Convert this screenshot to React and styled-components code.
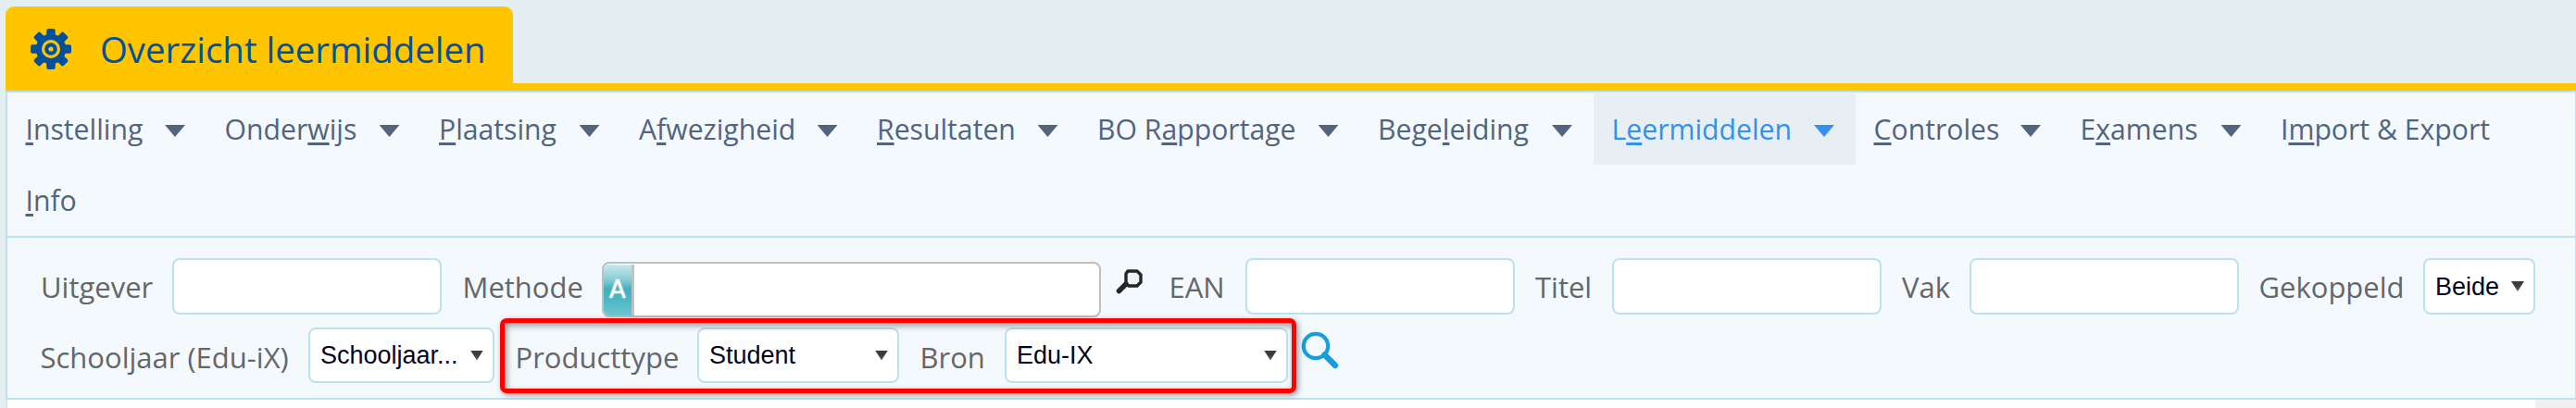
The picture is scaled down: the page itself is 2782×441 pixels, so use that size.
import React from 'react';
import styled, { createGlobalStyle } from 'styled-components';

const Global = createGlobalStyle`
  *, *::before, *::after { box-sizing: border-box; }
  body { margin: 0; background: #e5eef0; font-family: "Open Sans", "Noto Sans", sans-serif; }
`;

const Page = styled.div`
  height: 441px;
  padding: 7px 0 0 6px;
  overflow: hidden;
  display: flex;
  flex-direction: column;
`;

const TabBar = styled.header`
  height: 91px;
  flex: none;
  display: flex;
  align-items: stretch;
  border-bottom: 8px solid #ffc600;
`;

const Tab = styled.div`
  width: 548px;
  margin-bottom: -8px;
  padding-left: 27px;
  display: flex;
  align-items: center;
  gap: 31px;
  background: #ffc600;
  border-radius: 9px 9px 0 0;
  color: #00509e;
`;

const Title = styled.h1`
  margin: 0;
  font-size: 38.4px;
  font-weight: 400;
  line-height: 52px;
  white-space: nowrap;
`;

const Panel = styled.main`
  height: 334px;
  flex: none;
  background: #f3f9fd;
  border: 2px solid #bce1ef;
  border-right-width: 1px;
`;

const Menu = styled.nav`
  height: 157px;
  padding-top: 1px;
  display: flex;
  flex-wrap: wrap;
  align-content: flex-start;
  border-bottom: 2px solid #bce1ef;
`;

const MenuItem = styled.a`
  width: ${(p) => p.$width}px;
  height: 77px;
  padding: 0 23px 0 19.5px;
  display: flex;
  align-items: center;
  justify-content: space-between;
  font-size: 30.2px;
  white-space: nowrap;
  color: ${(p) => (p.$active ? '#348fee' : '#53647f')};
  background: ${(p) => (p.$active ? '#e7eff5' : 'transparent')};
`;

const AccessKey = styled.span`
  text-decoration: underline;
  text-decoration-thickness: 3px;
  text-underline-offset: 3px;
  text-decoration-skip-ink: none;
`;

const MenuArrow = styled.span`
  width: 22px;
  height: 13px;
  margin-top: 4px;
  background: currentColor;
  clip-path: polygon(0 0, 100% 0, 50% 100%);
`;

const Filters = styled.form`
  padding: 22px 0 0 34px;
  display: flex;
  flex-direction: column;
  gap: 14px;
`;

const FilterRow = styled.div`
  height: ${(p) => p.$height}px;
  display: flex;
  align-items: center;
`;

const Label = styled.label`
  width: ${(p) => p.$width}px;
  flex: none;
  padding: ${(p) => p.$drop || 0}px 0 0 ${(p) => p.$indent ?? 1.5}px;
  font-size: 31px;
  line-height: 42px;
  white-space: nowrap;
  color: #666;
`;

const TextInput = styled.input`
  width: 291px;
  height: 61px;
  flex: none;
  margin: 0 ${(p) => p.$after || 0}px 0 0;
  border: 2px solid #bce1ef;
  border-radius: 8px;
  background: #fff;
`;

const SelectBox = styled.div`
  width: ${(p) => p.$width}px;
  height: ${(p) => p.$height || 60}px;
  flex: none;
  margin-right: ${(p) => p.$after || 0}px;
  padding: 0 10px 0 11px;
  display: flex;
  align-items: center;
  justify-content: space-between;
  border: 2px solid #bce1ef;
  border-radius: 8px;
  background: #fff;
  font: 27px/36px "Liberation Sans", Arial, sans-serif;
  white-space: nowrap;
  color: #000420;
`;

const SelectArrow = styled.span`
  width: 14px;
  height: 11px;
  flex: none;
  background: linear-gradient(#3c3c3c 40%, #666);
  clip-path: polygon(0 0, 100% 0, 50% 100%);
`;

const Lookup = styled.div`
  width: 539px;
  height: 60px;
  flex: none;
  margin: 7px 16px 0 0;
  display: flex;
  overflow: hidden;
  border: 2px solid #bfbfbf;
  border-radius: 8px;
  background: #fff;
`;

const LookupMark = styled.span`
  width: 33px;
  margin-top: 1px;
  border-right: 3px solid #bfc1c2;
  background: linear-gradient(#c9e9ed 0%, #8ccfd6 28%, #44aebb 48%, #4bb8c6 70%, #6cc6d1 100%);
  color: #fff;
  font: 26px/54px "DejaVu Sans", sans-serif;
  text-align: center;
  text-shadow: 0 0 2px #fff;
`;

const LookupIcon = styled.svg`
  width: 30px;
  height: 28px;
  flex: none;
  margin: 0 26px 12px 0;
`;

const Highlight = styled.div`
  position: relative;
  height: 60px;
  display: flex;
  align-items: center;

  &::after {
    content: '';
    position: absolute;
    inset: -10px -9px -11px -15px;
    border: 5px solid #fe0000;
    border-radius: 7px;
    box-shadow: 2px 2px 6px rgba(0, 0, 0, 0.4), inset 2px 3px 7px rgba(0, 0, 0, 0.4);
    pointer-events: none;
  }
`;

const SearchIcon = styled.svg`
  width: 42px;
  height: 42px;
  flex: none;
  margin: 0 0 11px 14px;
`;

const Below = styled.footer`
  flex: 1;
  display: flex;
  margin-right: 44px;
  border-left: 2px solid #d9e6eb;
  background: #fff;
  box-shadow: 44px 0 0 #f0f0f0;
`;

const MENU = [
  ['', 'I', 'nstelling', 215],
  ['Onder', 'w', 'ijs', 231.5],
  ['', 'P', 'laatsing', 216],
  ['A', 'f', 'wezigheid', 257],
  ['', 'R', 'esultaten', 238],
  ['BO R', 'a', 'pportage', 303],
  ['Bege', 'l', 'eiding', 252.5],
  ['L', 'e', 'ermiddelen', 283, true],
  ['', 'C', 'ontroles', 223],
  ['E', 'x', 'amens', 216.5],
  ['I', 'm', 'port & Export', 290],
  ['', 'I', 'nfo', 120],
];

const NO_ARROW = new Set(['port & Export', 'nfo']);

function Gear() {
  return (
    <svg width="44" height="44" viewBox="-22 -22 44 44">
      <g fill="#00509e">
        {[0, 45, 90, 135].map((a) => (
          <rect key={a} x="-4.7" y={a % 90 ? -22.5 : -22} width="9.4" height={a % 90 ? 45 : 44} rx="2" transform={`rotate(${a})`} />
        ))}
        <circle r="16.3" />
      </g>
      <circle r="8.4" fill="none" stroke="#ffc600" strokeWidth="3.2" />
      <circle r="2.6" fill="#ffc600" />
    </svg>
  );
}

function Select({ value, ...box }) {
  return (
    <SelectBox {...box}>
      <span>{value}</span>
      <SelectArrow />
    </SelectBox>
  );
}

export default function App() {
  return (
    <Page>
      <Global />
      <TabBar>
        <Tab>
          <Gear />
          <Title>Overzicht leermiddelen</Title>
        </Tab>
      </TabBar>
      <Panel>
        <Menu>
          {MENU.map(([before, key, after, width, active]) => (
            <MenuItem key={after} $width={width} $active={active}>
              <span>
                {before}
                <AccessKey>{key}</AccessKey>
                {after}
              </span>
              {!NO_ARROW.has(after) && <MenuArrow />}
            </MenuItem>
          ))}
        </Menu>
        <Filters>
          <FilterRow $height={61}>
            <Label $width={144} $indent={2}>Uitgever</Label>
            <TextInput $after={21} />
            <Label $width={152}>Methode</Label>
            <Lookup>
              <LookupMark>A</LookupMark>
            </Lookup>
            <LookupIcon viewBox="0 0 30 28">
              <path d="M13 3h10l4 4v8l-4 4h-9l-3-3V6z" fill="#eef3f6" stroke="#252525" strokeWidth="3.4" strokeLinejoin="round" />
              <path d="M11 17L3.5 24.5" stroke="#252525" strokeWidth="5.5" strokeLinecap="round" />
            </LookupIcon>
            <Label $width={84}>EAN</Label>
            <TextInput $after={22} />
            <Label $width={83} $indent={0}>Titel</Label>
            <TextInput $after={22} />
            <Label $width={73} $indent={0}>Vak</Label>
            <TextInput $after={21} />
            <Label $width={178} $indent={0.5}>Gekoppeld</Label>
            <Select $width={121} $height={61} value="Beide" />
          </FilterRow>
          <FilterRow $height={60}>
            <Label $width={291} $drop={3}>Schooljaar (Edu-iX)</Label>
            <Select $width={201} $after={21} value="Schooljaar..." />
            <Highlight>
              <Label $width={198} $drop={3}>Producttype</Label>
              <Select $width={218} $after={21} value="Student" />
              <Label $width={93} $drop={3}>Bron</Label>
              <Select $width={306} value="Edu-IX" />
            </Highlight>
            <SearchIcon viewBox="0 0 42 42">
              <circle cx="16" cy="16" r="13.2" fill="none" stroke="#169fd9" strokeWidth="4.2" />
              <path d="M25.5 25.5L37 37" stroke="#169fd9" strokeWidth="6.5" strokeLinecap="round" />
            </SearchIcon>
          </FilterRow>
        </Filters>
      </Panel>
      <Below />
    </Page>
  );
}
